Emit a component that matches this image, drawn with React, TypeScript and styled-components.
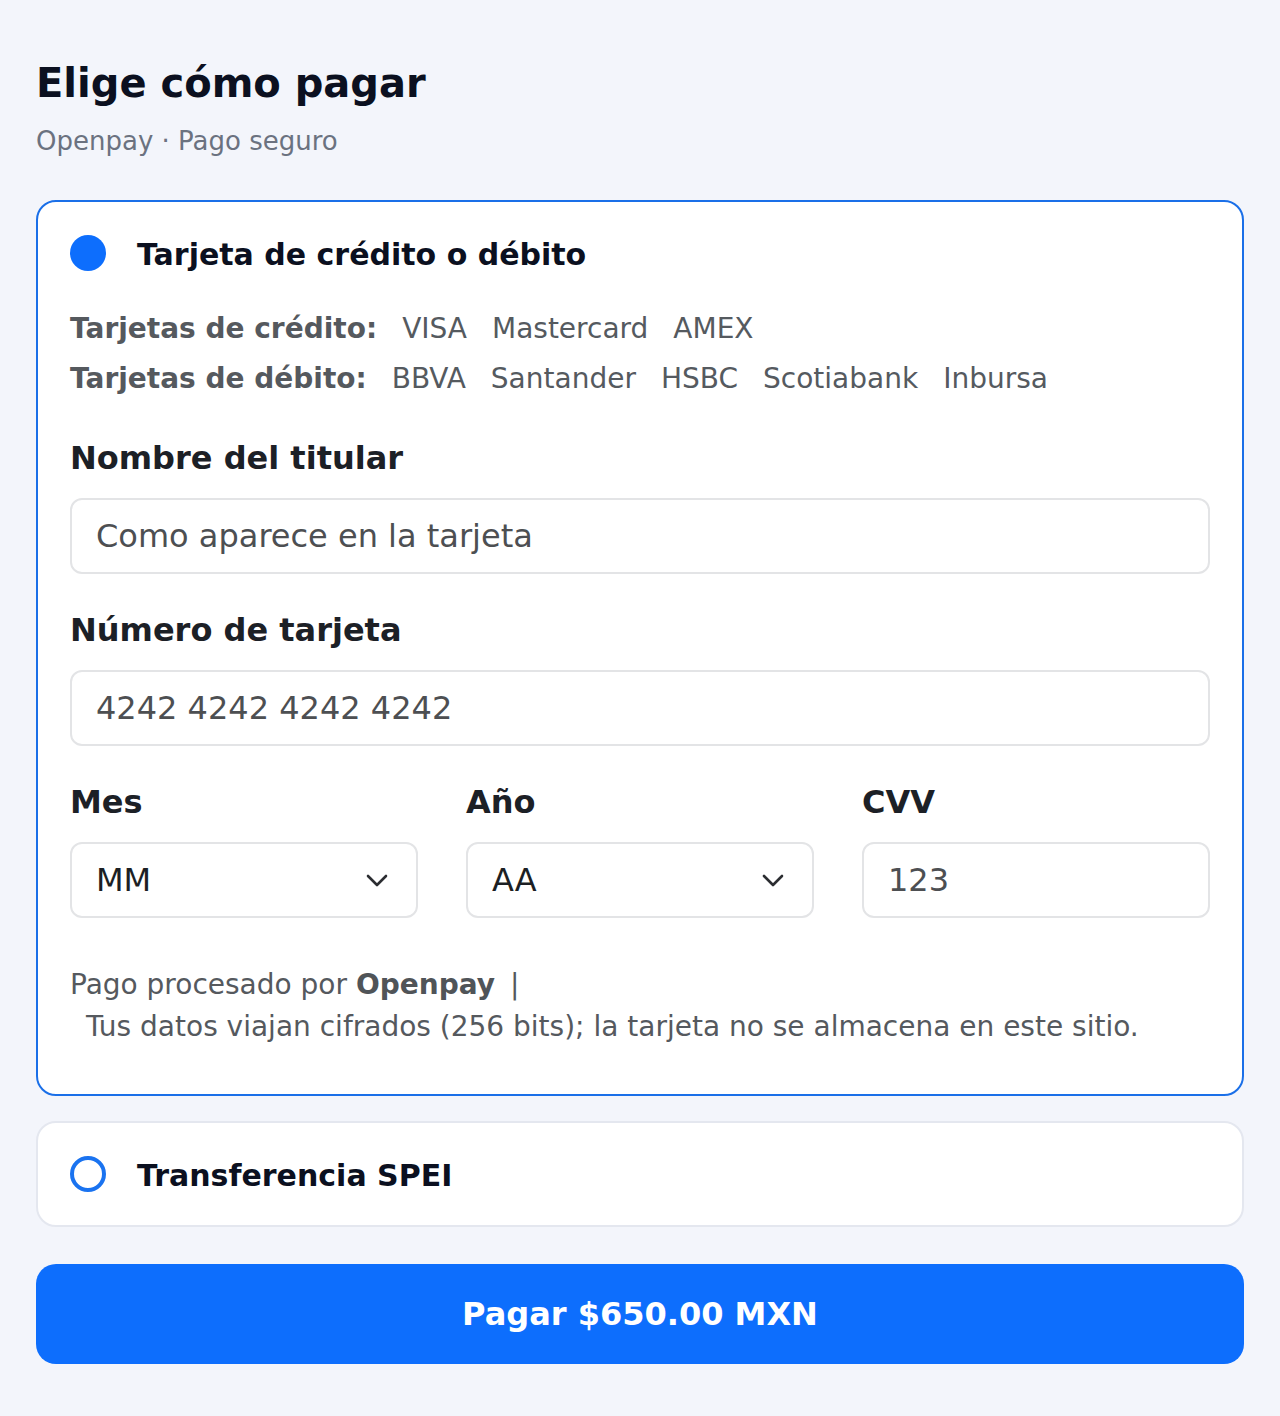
import React from "react";
import styled, { createGlobalStyle } from "styled-components";

const GlobalStyle = createGlobalStyle`
  html, body {
    margin: 0;
    padding: 0;
    background: #f3f5fb;
  }
  body {
    font-family: "DejaVu Sans", "Liberation Sans", sans-serif;
    -webkit-font-smoothing: antialiased;
  }
  * { box-sizing: border-box; }
`;

const Page = styled.main`
  display: flex;
  flex-direction: column;
  padding: 59px 36px 52px;
  min-height: 1416px;
  background: #f3f5fb;
`;

const Title = styled.h1`
  margin: 0;
  font-size: 40px;
  line-height: 48px;
  font-weight: 700;
  color: #0b1020;
`;

const Subtitle = styled.p`
  margin: 18px 0 0;
  font-size: 26px;
  line-height: 32px;
  color: #6b7280;
`;

const Methods = styled.div`
  display: flex;
  flex-direction: column;
  gap: 25px;
  margin-top: 43px;
`;

const MethodCard = styled.section<{ $active?: boolean }>`
  background: #ffffff;
  border: 2px solid ${(p) => (p.$active ? "#1a6fe8" : "#e4e7ef")};
  border-radius: 20px;
  padding: ${(p) => (p.$active ? "32px 32px 46px" : "32px")};
`;

const MethodHeader = styled.label`
  display: flex;
  align-items: center;
  gap: 31px;
  height: 38px;
  cursor: pointer;
`;

const Radio = styled.span<{ $checked?: boolean }>`
  flex: none;
  width: 36px;
  height: 36px;
  border-radius: 50%;
  background: ${(p) => (p.$checked ? "#0d6efd" : "#ffffff")};
  border: ${(p) => (p.$checked ? "none" : "4px solid #1a73f0")};
`;

const MethodTitle = styled.span`
  margin-top: 3px;
  font-size: 30px;
  line-height: 38px;
  font-weight: 700;
  color: #0b1020;
`;

const Brands = styled.div`
  margin-top: 32px;
  display: flex;
  flex-direction: column;
`;

const BrandRow = styled.div`
  display: flex;
  align-items: baseline;
  gap: 25px;
  font-size: 28px;
  line-height: 50px;
  color: #555a5f;
`;

const BrandLabel = styled.strong`
  font-weight: 700;
  color: #55595e;
`;

const Fields = styled.div`
  margin-top: 34px;
  display: flex;
  flex-direction: column;
  gap: 36px;
`;

const Field = styled.div`
  display: flex;
  flex-direction: column;
  gap: 20px;
  min-width: 0;
`;

const FieldLabel = styled.label`
  font-size: 32px;
  line-height: 40px;
  font-weight: 700;
  color: #1c2026;
`;

const TextInput = styled.input`
  width: 100%;
  height: 76px;
  padding: 0 24px;
  border: 2px solid #e3e4e6;
  border-radius: 12px;
  background: #ffffff;
  font-family: "DejaVu Sans", sans-serif;
  font-size: 32px;
  color: #1c1f24;
  outline: none;
  &::placeholder {
    color: #4d4f52;
    opacity: 1;
  }
`;

const Row3 = styled.div`
  display: grid;
  grid-template-columns: repeat(3, 1fr);
  gap: 48px;
`;

const SelectWrap = styled.div`
  position: relative;
`;

const Select = styled.select`
  appearance: none;
  -webkit-appearance: none;
  width: 100%;
  height: 76px;
  padding: 0 24px;
  border: 2px solid #e3e4e6;
  border-radius: 12px;
  background: #ffffff;
  font-family: "DejaVu Sans", sans-serif;
  font-size: 32px;
  color: #1c1f24;
  outline: none;
`;

const Chevron = styled.svg`
  position: absolute;
  right: 30px;
  top: 50%;
  width: 22px;
  height: 13px;
  margin-top: -6px;
  pointer-events: none;
`;

const Footnote = styled.p`
  margin: 46px 0 0;
  font-size: 28px;
  line-height: 42px;
  color: #55595e;
`;

const Brand = styled.strong`
  font-weight: 700;
  color: #505458;
`;

const Sep = styled.span`
  margin-left: 15px;
`;

const FootLine = styled.span`
  display: block;
  padding-left: 16px;
`;

const PayButton = styled.button`
  margin-top: 37px;
  height: 100px;
  width: 100%;
  border: none;
  border-radius: 20px;
  background: #0d6efd;
  color: #ffffff;
  font-family: "DejaVu Sans", sans-serif;
  font-size: 32px;
  font-weight: 700;
  cursor: pointer;
`;

const ChevronIcon = () => (
  <Chevron viewBox="0 0 22 13" fill="none">
    <path d="M2 2 L11 11 L20 2" stroke="#2b2d31" strokeWidth="2.6" strokeLinecap="round" strokeLinejoin="round" />
  </Chevron>
);

export default function App() {
  return (
    <>
      <GlobalStyle />
      <Page>
        <Title>Elige cómo pagar</Title>
        <Subtitle>Openpay · Pago seguro</Subtitle>
        <Methods>
          <MethodCard $active>
            <MethodHeader>
              <Radio $checked />
              <MethodTitle>Tarjeta de crédito o débito</MethodTitle>
            </MethodHeader>
            <Brands>
              <BrandRow>
                <BrandLabel>Tarjetas de crédito:</BrandLabel>
                <span>VISA</span>
                <span>Mastercard</span>
                <span>AMEX</span>
              </BrandRow>
              <BrandRow>
                <BrandLabel>Tarjetas de débito:</BrandLabel>
                <span>BBVA</span>
                <span>Santander</span>
                <span>HSBC</span>
                <span>Scotiabank</span>
                <span>Inbursa</span>
              </BrandRow>
            </Brands>
            <Fields>
              <Field>
                <FieldLabel htmlFor="holder">Nombre del titular</FieldLabel>
                <TextInput id="holder" placeholder="Como aparece en la tarjeta" />
              </Field>
              <Field>
                <FieldLabel htmlFor="number">Número de tarjeta</FieldLabel>
                <TextInput id="number" placeholder="4242 4242 4242 4242" />
              </Field>
              <Row3>
                <Field>
                  <FieldLabel htmlFor="month">Mes</FieldLabel>
                  <SelectWrap>
                    <Select id="month" defaultValue="">
                      <option value="">MM</option>
                    </Select>
                    <ChevronIcon />
                  </SelectWrap>
                </Field>
                <Field>
                  <FieldLabel htmlFor="year">Año</FieldLabel>
                  <SelectWrap>
                    <Select id="year" defaultValue="">
                      <option value="">AA</option>
                    </Select>
                    <ChevronIcon />
                  </SelectWrap>
                </Field>
                <Field>
                  <FieldLabel htmlFor="cvv">CVV</FieldLabel>
                  <TextInput id="cvv" placeholder="123" />
                </Field>
              </Row3>
            </Fields>
            <Footnote>
              Pago procesado por <Brand>Openpay</Brand>
              <Sep>|</Sep>
              <FootLine>Tus datos viajan cifrados (256 bits); la tarjeta no se almacena en este sitio.</FootLine>
            </Footnote>
          </MethodCard>
          <MethodCard>
            <MethodHeader>
              <Radio />
              <MethodTitle>Transferencia SPEI</MethodTitle>
            </MethodHeader>
          </MethodCard>
        </Methods>
        <PayButton>Pagar $650.00 MXN</PayButton>
      </Page>
    </>
  );
}
